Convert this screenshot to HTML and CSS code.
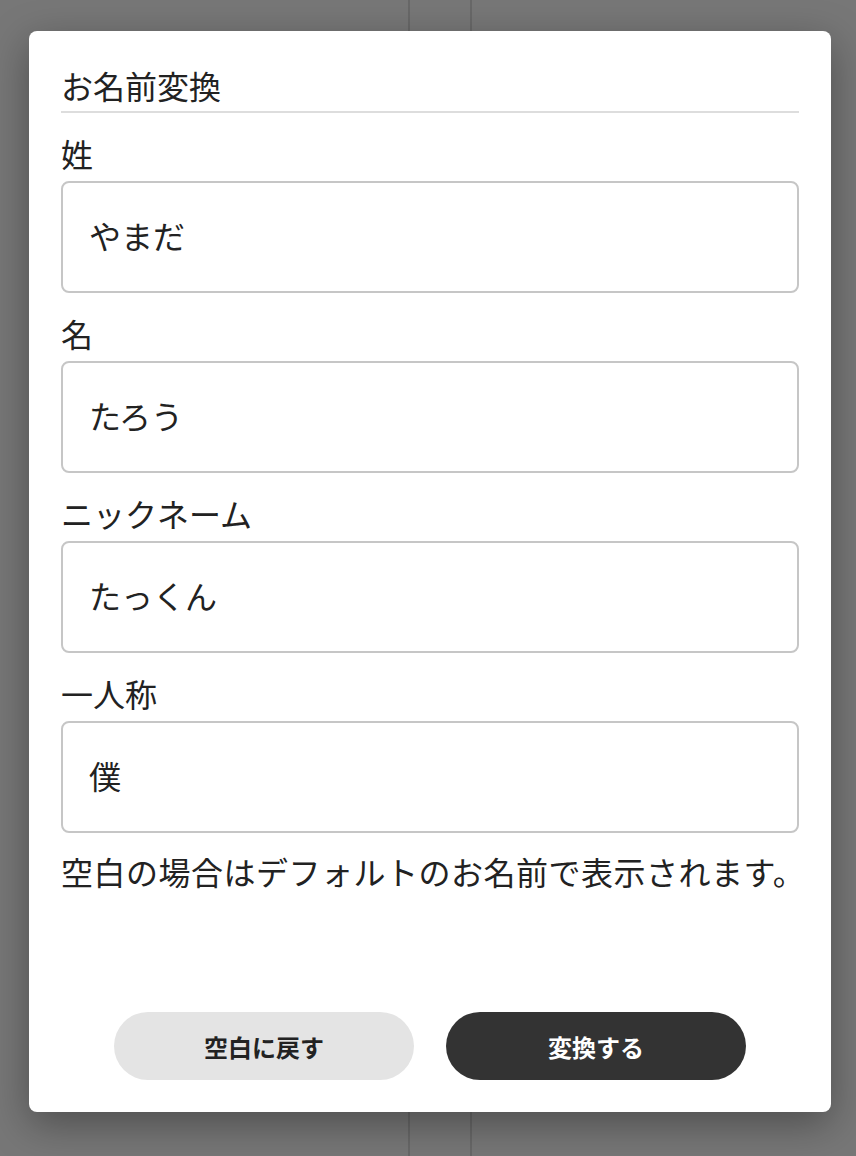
FILE: index.html
```html
<!DOCTYPE html>
<html lang="ja">
<head>
    <meta charset="UTF-8">
    <meta name="viewport" content="width=device-width, initial-scale=1.0">
    <link rel="stylesheet" href="styles.css">
</head>
<body>
    <div class="modal">
        <h2 class="title">お名前変換</h2>
        <div class="field">
            <label for="sei">姓</label>
            <input type="text" id="sei" value="やまだ">
        </div>
        <div class="field">
            <label for="mei">名</label>
            <input type="text" id="mei" value="たろう">
        </div>
        <div class="field">
            <label for="nick">ニックネーム</label>
            <input type="text" id="nick" value="たっくん">
        </div>
        <div class="field">
            <label for="ichi">一人称</label>
            <input type="text" id="ichi" value="僕">
        </div>
        <p class="note">空白の場合はデフォルトのお名前で表示されます。</p>
        <div class="buttons">
            <button class="btn btn-clear">空白に戻す</button>
            <button class="btn btn-ok">変換する</button>
        </div>
    </div>
</body>
</html>
```
FILE: styles.css
```css
html, body {
    height: 100%;
}
body {
    margin: 0;
    font-family: "Noto Sans CJK JP", "Noto Sans", sans-serif;
    color: #222;
    background-color: #777;
    background-image:
        linear-gradient(to right, transparent 408px, #686868 408px, #686868 410px, transparent 410px),
        linear-gradient(to right, transparent 470px, #686868 470px, #686868 472px, transparent 472px);
    overflow: hidden;
}
.modal {
    box-sizing: border-box;
    width: 802px;
    height: 1081px;
    margin: 31px 0 0 29px;
    padding: 32px;
    background: #fff;
    border-radius: 8px;
    box-shadow: 0 12px 40px rgba(0, 0, 0, 0.35);
    display: flex;
    flex-direction: column;
}
.title {
    margin: 0;
    padding-bottom: 4px;
    font-size: 32px;
    font-weight: normal;
    line-height: 44px;
    border-bottom: 2px solid #ddd;
}
.field {
    display: flex;
    flex-direction: column;
    gap: 6px;
    margin-top: 18px;
}
.field label {
    font-size: 32px;
    line-height: 44px;
}
.field input {
    box-sizing: border-box;
    width: 100%;
    height: 112px;
    padding: 0 26px 4px;
    border: 2px solid #c6c6c6;
    border-radius: 8px;
    font-family: inherit;
    font-size: 32px;
    color: #222;
    outline: none;
}
.note {
    margin: 16px 0 0;
    font-size: 32px;
    line-height: 44px;
    letter-spacing: 0.5px;
    white-space: nowrap;
}
.buttons {
    margin-top: auto;
    display: flex;
    justify-content: center;
    gap: 32px;
}
.btn {
    width: 300px;
    height: 68px;
    border: none;
    border-radius: 34px;
    font-family: inherit;
    font-size: 24px;
    font-weight: bold;
    cursor: pointer;
}
.btn-clear {
    background: #e4e4e4;
    color: #222;
}
.btn-ok {
    background: #333;
    color: #fff;
}
```
